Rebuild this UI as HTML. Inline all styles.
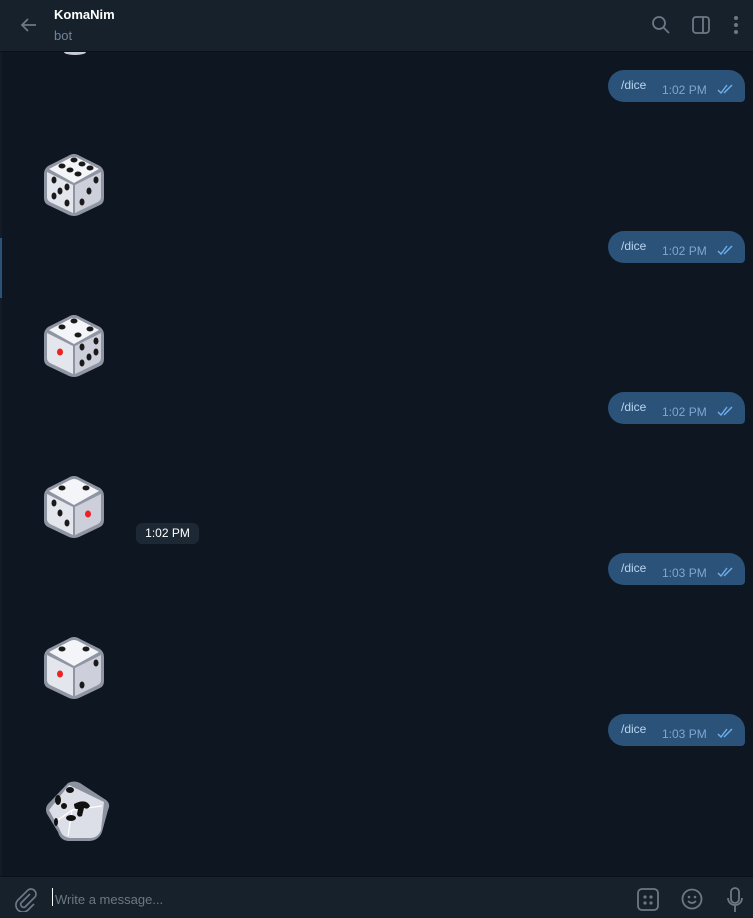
<!DOCTYPE html>
<html><head><meta charset="utf-8"><style>
*{margin:0;padding:0;box-sizing:border-box}
body{width:753px;height:918px;background:#0e1621;font-family:"Liberation Sans",sans-serif;position:relative;overflow:hidden}
.hdr{position:absolute;left:0;top:0;width:753px;height:52px;background:#17212b;border-bottom:1px solid #0b1118}
.name{position:absolute;left:54px;top:7px;color:#fff;font-weight:bold;font-size:13px}
.sub{position:absolute;left:54px;top:28px;color:#708499;font-size:13px}
.bub{position:absolute;left:608px;width:137px;height:32px;background:#2b5278;border-radius:16px 16px 4px 16px}
.bub .t{position:absolute;left:13px;top:8px;color:#b8d4ee;font-size:12px}
.bub .tm{position:absolute;left:54px;top:13px;color:#7da8d3;font-size:12px}
.bub svg.ck{position:absolute;left:109px;top:14px}
.die{position:absolute;left:44px}
.tip{position:absolute;left:136px;top:523px;width:63px;height:21px;background:#1c2833;border-radius:6px;color:#fff;font-size:12px;text-align:center;line-height:21px}
.bar{position:absolute;left:0;top:876px;width:753px;height:42px;background:#17212b;border-top:1px solid #0b1118}
.ph{position:absolute;left:55px;top:15px;color:#6c7883;font-size:13px}
.cur{position:absolute;left:52px;top:11px;width:1px;height:18px;background:#fff}
.edge{position:absolute;left:0;top:52px;width:2px;height:824px;background:#131c26}
</style></head><body>
<div class="hdr">
<svg style="position:absolute;left:19px;top:15px" width="20" height="20" viewBox="0 0 20 20"><path d="M17 10H3M9 4L3 10l6 6" fill="none" stroke="#6c7883" stroke-width="1.8"/></svg>
<div class="name">KomaNim</div><div class="sub">bot</div>
<svg style="position:absolute;left:651px;top:15px" width="20" height="20" viewBox="0 0 20 20"><circle cx="8" cy="8" r="6" fill="none" stroke="#6c7883" stroke-width="1.8"/><path d="M12.5 12.5L18 18" stroke="#6c7883" stroke-width="1.8"/></svg>
<svg style="position:absolute;left:691px;top:15px" width="20" height="20" viewBox="0 0 20 20"><rect x="2" y="2" width="16" height="16" rx="3" fill="none" stroke="#6c7883" stroke-width="1.8"/><path d="M12 2v16" stroke="#6c7883" stroke-width="1.8"/></svg>
<svg style="position:absolute;left:731px;top:15px" width="10" height="20" viewBox="0 0 10 20"><circle cx="5" cy="3" r="2" fill="#6c7883"/><circle cx="5" cy="10" r="2" fill="#6c7883"/><circle cx="5" cy="17" r="2" fill="#6c7883"/></svg>
</div>
<div class="edge"></div>
<div style="position:absolute;left:0;top:238px;width:2px;height:60px;background:#2b5278"></div>
<svg style="position:absolute;left:60px;top:52px" width="30" height="5"><ellipse cx="15" cy="0" rx="11" ry="3" fill="#c8cad4"/></svg>

<svg width="0" height="0" style="position:absolute"><defs>
<g id="cube"><path d="M30 1 Q33 1 36 3 L56 13 Q60 16 60 21 L60 45 Q60 50 56 52 L35 62 Q30 64 25 62 L4 52 Q0 50 0 45 L0 21 Q0 16 4 13 L24 3 Q27 1 30 1Z" fill="#8f95a3"/>
<path d="M30 4 Q32 4 34 5 L55 16 L30 30 L5 16 L26 5 Q28 4 30 4Z" fill="#f4f5f8"/>
<path d="M3 19 L29 32 L29 60 L6 49 Q3 47 3 44 Z" fill="#e4e6ed"/>
<path d="M31 32 L57 19 L57 44 Q57 47 54 49 L31 60 Z" fill="#cdd0da"/></g>
</defs></svg>

<div class="bub" style="top:70px"><span class="t">/dice</span><span class="tm">1:02 PM</span><svg class="ck" width="18" height="10" viewBox="0 0 18 10"><path d="M1 6l3 3 6-8M7 9l8-8" fill="none" stroke="#6fb0f0" stroke-width="1.4"/></svg></div>
<div class="bub" style="top:231px"><span class="t">/dice</span><span class="tm">1:02 PM</span><svg class="ck" width="18" height="10" viewBox="0 0 18 10"><path d="M1 6l3 3 6-8M7 9l8-8" fill="none" stroke="#6fb0f0" stroke-width="1.4"/></svg></div>
<div class="bub" style="top:392px"><span class="t">/dice</span><span class="tm">1:02 PM</span><svg class="ck" width="18" height="10" viewBox="0 0 18 10"><path d="M1 6l3 3 6-8M7 9l8-8" fill="none" stroke="#6fb0f0" stroke-width="1.4"/></svg></div>
<div class="bub" style="top:553px"><span class="t">/dice</span><span class="tm">1:03 PM</span><svg class="ck" width="18" height="10" viewBox="0 0 18 10"><path d="M1 6l3 3 6-8M7 9l8-8" fill="none" stroke="#6fb0f0" stroke-width="1.4"/></svg></div>
<div class="bub" style="top:714px"><span class="t">/dice</span><span class="tm">1:03 PM</span><svg class="ck" width="18" height="10" viewBox="0 0 18 10"><path d="M1 6l3 3 6-8M7 9l8-8" fill="none" stroke="#6fb0f0" stroke-width="1.4"/></svg></div>

<svg class="die" style="top:153px" width="62" height="64" viewBox="0 0 62 64"><use href="#cube"/><g fill="#1a1a1a"><ellipse cx="30" cy="7" rx="3.5" ry="2.5"/><ellipse cx="38" cy="11" rx="3.5" ry="2.5"/><ellipse cx="46" cy="15" rx="3.5" ry="2.5"/><ellipse cx="18" cy="13" rx="3.5" ry="2.5"/><ellipse cx="26" cy="17" rx="3.5" ry="2.5"/><ellipse cx="34" cy="21" rx="3.5" ry="2.5"/><ellipse cx="10" cy="27" rx="2.5" ry="3.5"/><ellipse cx="23" cy="34" rx="2.5" ry="3.5"/><ellipse cx="16" cy="38" rx="2.5" ry="3.5"/><ellipse cx="10" cy="43" rx="2.5" ry="3.5"/><ellipse cx="23" cy="50" rx="2.5" ry="3.5"/><ellipse cx="52" cy="27" rx="2.5" ry="3.5"/><ellipse cx="45" cy="38" rx="2.5" ry="3.5"/><ellipse cx="38" cy="49" rx="2.5" ry="3.5"/></g></svg>
<svg class="die" style="top:314px" width="62" height="64" viewBox="0 0 62 64"><use href="#cube"/><g fill="#1a1a1a"><ellipse cx="30" cy="7" rx="3.5" ry="2.5"/><ellipse cx="46" cy="15" rx="3.5" ry="2.5"/><ellipse cx="18" cy="13" rx="3.5" ry="2.5"/><ellipse cx="34" cy="21" rx="3.5" ry="2.5"/><ellipse cx="52" cy="27" rx="2.5" ry="3.5"/><ellipse cx="38" cy="33" rx="2.5" ry="3.5"/><ellipse cx="52" cy="38" rx="2.5" ry="3.5"/><ellipse cx="38" cy="49" rx="2.5" ry="3.5"/><ellipse cx="45" cy="43" rx="2.5" ry="3.5"/></g><ellipse cx="16" cy="38" rx="3" ry="3.5" fill="#e22"/></svg>
<svg class="die" style="top:475px" width="62" height="64" viewBox="0 0 62 64"><use href="#cube"/><g fill="#1a1a1a"><ellipse cx="18" cy="13" rx="3.5" ry="2.5"/><ellipse cx="42" cy="13" rx="3.5" ry="2.5"/><ellipse cx="10" cy="28" rx="2.5" ry="3.5"/><ellipse cx="16" cy="38" rx="2.5" ry="3.5"/><ellipse cx="23" cy="48" rx="2.5" ry="3.5"/></g><ellipse cx="44" cy="39" rx="3" ry="3.5" fill="#e22"/></svg>
<svg class="die" style="top:636px" width="62" height="64" viewBox="0 0 62 64"><use href="#cube"/><g fill="#1a1a1a"><ellipse cx="18" cy="13" rx="3.5" ry="2.5"/><ellipse cx="42" cy="13" rx="3.5" ry="2.5"/><ellipse cx="52" cy="27" rx="2.5" ry="3.5"/><ellipse cx="38" cy="49" rx="2.5" ry="3.5"/></g><ellipse cx="16" cy="38" rx="3" ry="3.5" fill="#e22"/></svg>
<svg class="die" style="top:780px" width="70" height="64" viewBox="0 0 70 64"><path d="M24 3 Q30 0 36 3 L62 20 Q67 24 64 30 L58 52 Q55 60 46 61 L24 61 Q16 60 14 52 L3 34 Q0 27 6 22 Z" fill="#8c92a0"/><path d="M25 5 L60 22 L57 50 Q54 58 46 58 L26 58 Q18 57 16 50 L5 30 Z" fill="#dcdfe8"/><path d="M28 30 L14 40 M28 30 L24 56 M28 30 L58 26" stroke="#fff" stroke-width="1.2" fill="none"/><g fill="#111"><ellipse cx="26" cy="10" rx="4" ry="3"/><ellipse cx="14" cy="20" rx="3" ry="5"/><ellipse cx="20" cy="26" rx="3" ry="3"/><path d="M30 24 Q42 18 46 26 Q44 30 40 28 L38 36 Q34 38 33 34 L34 29 Q30 30 30 24Z"/><ellipse cx="27" cy="38" rx="5" ry="3"/><ellipse cx="12" cy="42" rx="2" ry="4"/></g></svg>

<div class="tip">1:02 PM</div>

<div class="bar">
<svg style="position:absolute;left:14px;top:11px" width="24" height="24" viewBox="0 0 24 24"><path d="M16 6L7 15a3 3 0 004 4l10-10a5 5 0 00-7-7L4 12a7 7 0 0010 10l6-6" fill="none" stroke="#6c7883" stroke-width="1.7"/></svg>
<div class="cur"></div><div class="ph">Write a message...</div>
<svg style="position:absolute;left:637px;top:11px" width="22" height="23" viewBox="0 0 22 23"><rect x="1" y="1" width="20" height="21" rx="4" fill="none" stroke="#6c7883" stroke-width="1.8"/><circle cx="8" cy="9" r="1.6" fill="#6c7883"/><circle cx="14" cy="9" r="1.6" fill="#6c7883"/><circle cx="8" cy="15" r="1.6" fill="#6c7883"/><circle cx="14" cy="15" r="1.6" fill="#6c7883"/></svg>
<svg style="position:absolute;left:681px;top:11px" width="22" height="22" viewBox="0 0 22 22"><circle cx="11" cy="11" r="9.5" fill="none" stroke="#6c7883" stroke-width="1.8"/><circle cx="8" cy="9" r="1.3" fill="#6c7883"/><circle cx="14" cy="9" r="1.3" fill="#6c7883"/><path d="M7 13q4 4 8 0" fill="none" stroke="#6c7883" stroke-width="1.6"/></svg>
<svg style="position:absolute;left:726px;top:10px" width="18" height="26" viewBox="0 0 18 26"><rect x="5" y="1" width="8" height="15" rx="4" fill="none" stroke="#6c7883" stroke-width="1.8"/><path d="M2 11a7 7 0 0014 0M9 18v7" fill="none" stroke="#6c7883" stroke-width="1.8"/></svg>
</div>
</body></html>
